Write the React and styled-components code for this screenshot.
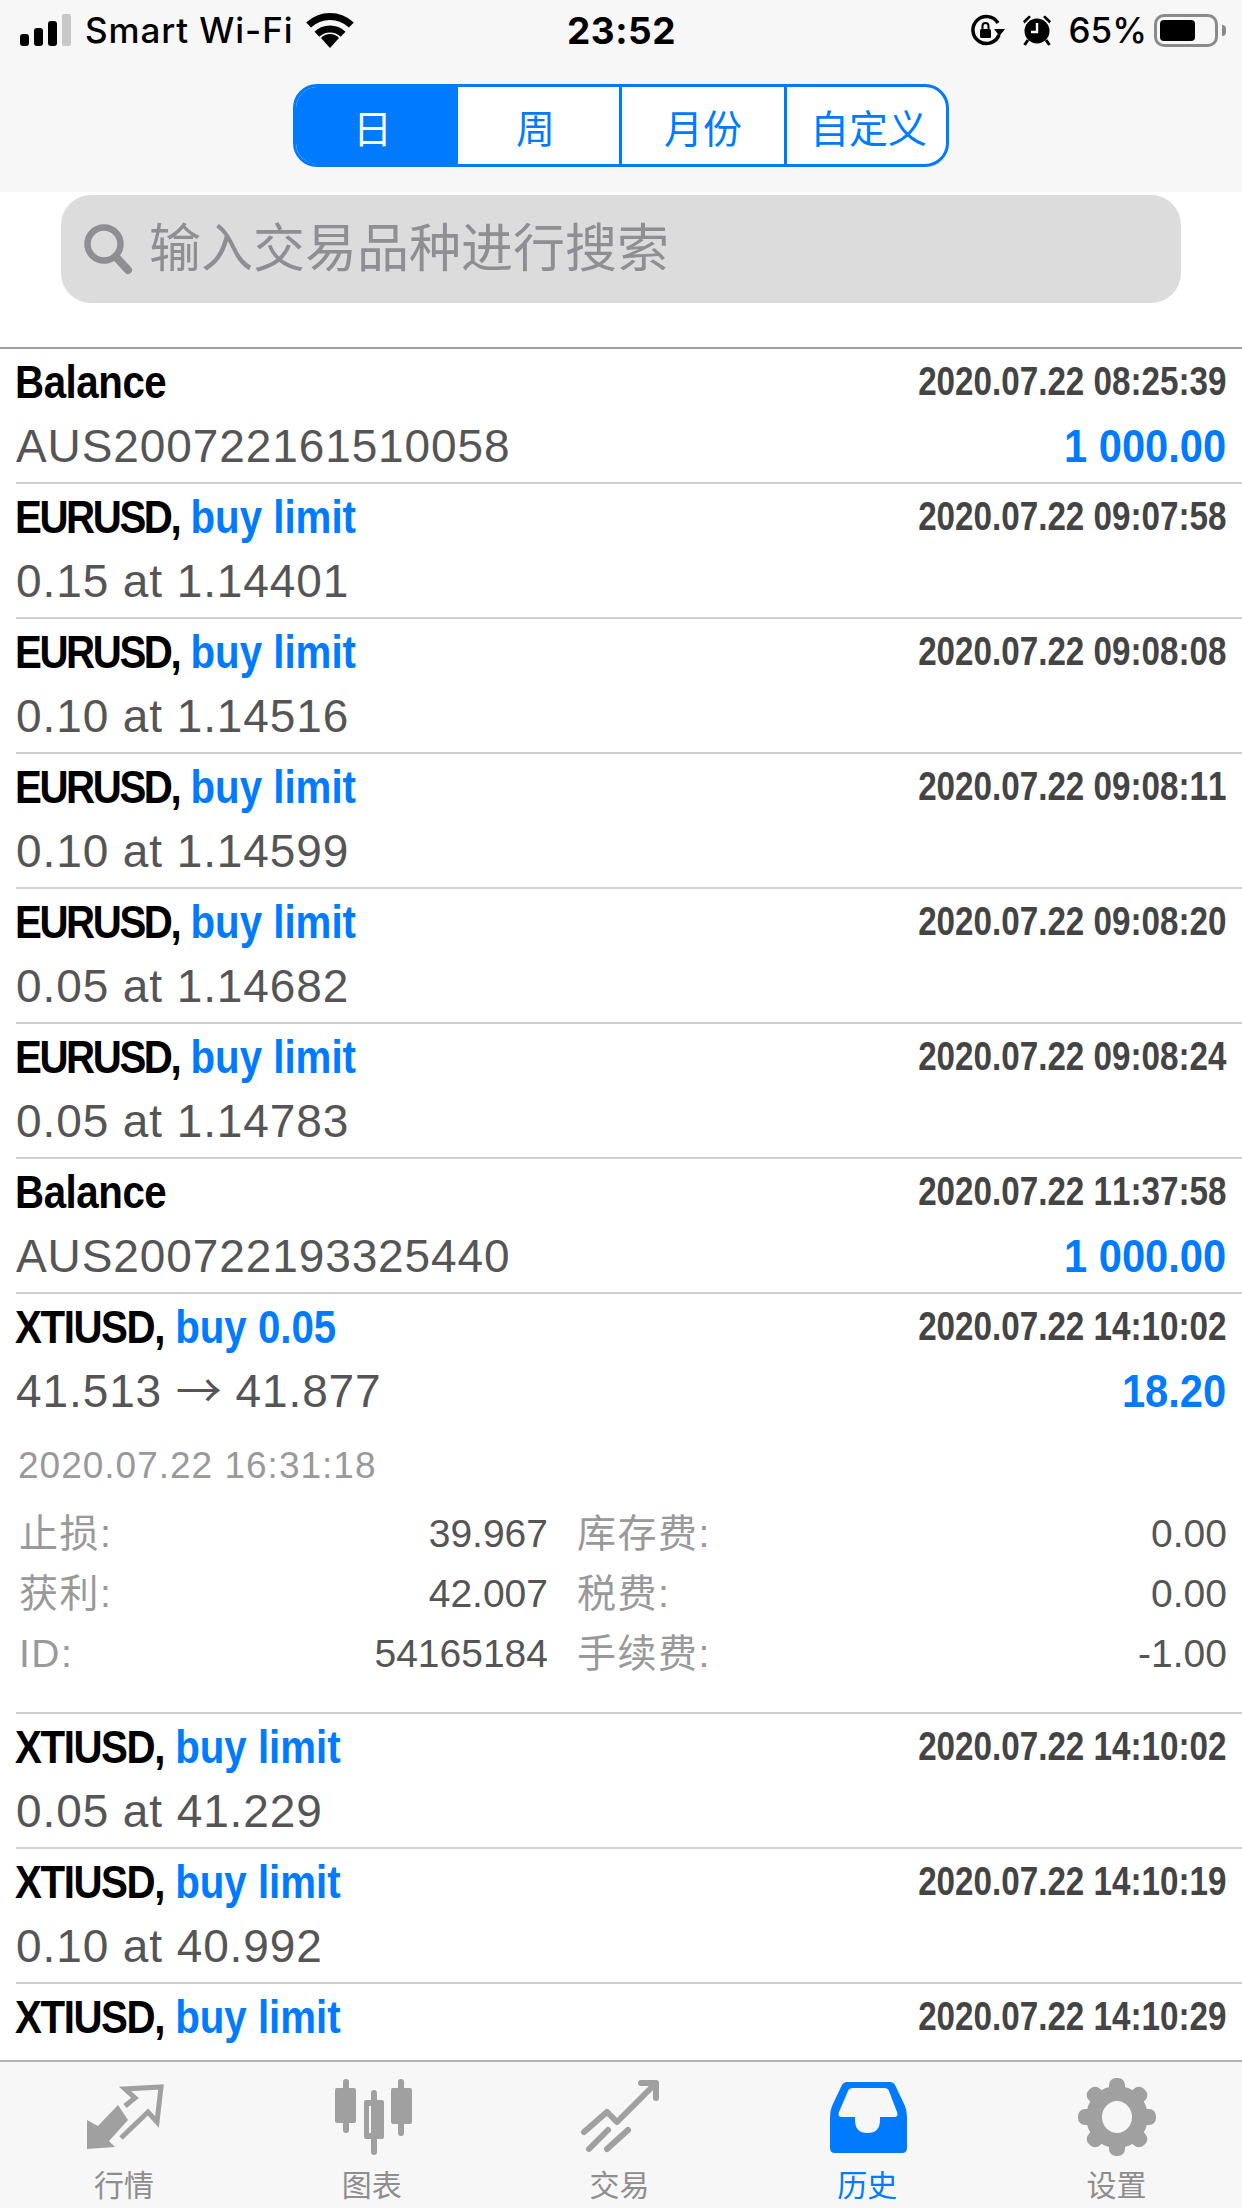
import React from "react";
import styled, { createGlobalStyle } from "styled-components";

const BLUE = "#007aff";
const ICON_GREY = "#a0a0a0";
const SANS = `"Liberation Sans", "Noto Sans CJK SC", sans-serif`;

const records = [
  { symbol: "Balance", date: "2020.07.22 08:25:39", sub: "AUS200722161510058", amount: "1 000.00" },
  { symbol: "EURUSD,", action: "buy limit", date: "2020.07.22 09:07:58", sub: "0.15 at 1.14401" },
  { symbol: "EURUSD,", action: "buy limit", date: "2020.07.22 09:08:08", sub: "0.10 at 1.14516" },
  { symbol: "EURUSD,", action: "buy limit", date: "2020.07.22 09:08:11", sub: "0.10 at 1.14599" },
  { symbol: "EURUSD,", action: "buy limit", date: "2020.07.22 09:08:20", sub: "0.05 at 1.14682" },
  { symbol: "EURUSD,", action: "buy limit", date: "2020.07.22 09:08:24", sub: "0.05 at 1.14783" },
  { symbol: "Balance", date: "2020.07.22 11:37:58", sub: "AUS200722193325440", amount: "1 000.00" },
  {
    symbol: "XTIUSD,",
    action: "buy 0.05",
    date: "2020.07.22 14:10:02",
    sub: "41.513 → 41.877",
    amount: "18.20",
    closed: "2020.07.22 16:31:18",
    details: [
      ["止损:", "39.967"],
      ["库存费:", "0.00"],
      ["获利:", "42.007"],
      ["税费:", "0.00"],
      ["ID:", "54165184"],
      ["手续费:", "-1.00"],
    ],
  },
  { symbol: "XTIUSD,", action: "buy limit", date: "2020.07.22 14:10:02", sub: "0.05 at 41.229" },
  { symbol: "XTIUSD,", action: "buy limit", date: "2020.07.22 14:10:19", sub: "0.10 at 40.992" },
  // second line of this one sits behind the tab bar
  { symbol: "XTIUSD,", action: "buy limit", date: "2020.07.22 14:10:29" },
];

const periods = ["日", "周", "月份", "自定义"];

const symbolTightness = { "EURUSD,": 2.75, "XTIUSD,": 1.6, Balance: 0.5 };

const MarketIcon = () => (
  <svg width="90" height="80" viewBox="0 0 90 80">
    <path d="M8 43 L8 72 L36 70 L30 64 L49 43 L39 28 L19 49 Z" fill={ICON_GREY} />
    <path
      d="M46 29 L56 21 L46 12 L82 10 L78 45 L69 35 L42 61"
      fill="none"
      stroke={ICON_GREY}
      strokeWidth="5"
    />
  </svg>
);

const ChartIcon = () => (
  <svg width="90" height="80" viewBox="0 0 90 80" fill={ICON_GREY}>
    <rect x="16" y="2" width="6" height="54" rx="3" />
    <rect x="8" y="11" width="21" height="35" rx="2" />
    <rect x="44" y="13" width="6" height="65" rx="3" />
    <path fillRule="evenodd" d="M37 25 a2 2 0 0 1 2 -2 h16 a2 2 0 0 1 2 2 v35 a2 2 0 0 1 -2 2 h-16 a2 2 0 0 1 -2 -2 Z M42 29 v27 h8 v-27 Z" />
    <rect x="71" y="2" width="6" height="57" rx="3" />
    <rect x="64" y="11" width="21" height="36" rx="2" />
  </svg>
);

const TradeIcon = () => (
  <svg width="90" height="80" viewBox="0 0 90 80" fill="none" stroke={ICON_GREY} strokeWidth="6" strokeLinecap="round" strokeLinejoin="round">
    <path d="M10 55 L33 35 L43 45 L80 8" />
    <path d="M67 6 L82 6 L82 21" />
    <path d="M15 72 L34 53" />
    <path d="M33 72 L54 53" />
  </svg>
);

const HistoryIcon = () => (
  <svg width="90" height="80" viewBox="0 0 90 80">
    <path
      fillRule="evenodd"
      fill={BLUE}
      d="M25 5 H68 Q72 5 74 10 L83 29 Q85 34 85 40 V71 Q85 76 80 76 H13 Q8 76 8 71 V40 Q8 34 10 29 L19 10 Q21 5 25 5 Z
         M31 11 Q27 11 26 14 L17 35 Q15 40 20 40 H33 V43 Q33 56 45.5 56 Q58 56 58 43 V40 H72 Q77 40 75 35 L67 14 Q66 11 62 11 Z"
    />
  </svg>
);

const SettingsIcon = () => (
  <svg width="90" height="80" viewBox="0 0 90 80" fill={ICON_GREY}>
    {[0, 45, 90, 135, 180, 225, 270, 315].map((angle) => (
      <rect key={angle} x="37" y="1" width="16" height="20" rx="7" transform={`rotate(${angle} 45 40)`} />
    ))}
    <circle cx="45" cy="40" r="31" />
    <ellipse cx="45" cy="40" rx="15" ry="16" fill="#f7f7f7" />
  </svg>
);

const tabs = [
  { label: "行情", Icon: MarketIcon },
  { label: "图表", Icon: ChartIcon },
  { label: "交易", Icon: TradeIcon },
  { label: "历史", Icon: HistoryIcon, active: true },
  { label: "设置", Icon: SettingsIcon },
];

const SignalIcon = () => (
  <svg width="52" height="32" viewBox="0 0 52 32">
    <rect x="0" y="20" width="9" height="12" rx="3" fill="#000" />
    <rect x="14" y="14" width="9" height="18" rx="3" fill="#000" />
    <rect x="28" y="7" width="9" height="25" rx="3" fill="#000" />
    <rect x="42" y="0" width="9" height="32" rx="2" fill="#c8c8c8" />
  </svg>
);

const WifiIcon = () => (
  <svg width="48" height="36" viewBox="0 0 48 36" fill="none" stroke="#000" strokeWidth="7">
    <path d="M2.6 13 A31 31 0 0 1 45.4 13" />
    <path d="M10.9 22.2 A19 19 0 0 1 37.1 22.2" />
    <path d="M24 36 L15 26 A12 12 0 0 1 33 26 Z" fill="#000" stroke="none" />
  </svg>
);

const RotationLockIcon = () => (
  <svg width="36" height="32" viewBox="0 0 36 32">
    <path d="M30 21 A13.5 13.5 0 1 1 29 9" fill="none" stroke="#000" strokeWidth="3.5" />
    <path d="M25 15 H36 L30.5 22 Z" fill="#000" />
    <rect x="11" y="15" width="11" height="9" rx="1.5" fill="#000" />
    <path d="M13.5 15 V12 A3 3 0 0 1 19.5 12 V15" fill="none" stroke="#000" strokeWidth="2" />
  </svg>
);

const AlarmIcon = () => (
  <svg width="30" height="32" viewBox="0 0 30 32">
    <circle cx="15" cy="17" r="12.5" fill="#000" />
    <path d="M1 7 L7 1.5 L9 3 L2.5 9.5 Z M29 7 L23 1.5 L21 3 L27.5 9.5 Z" fill="#000" />
    <path d="M6 26 L2.5 31 M24 26 L27.5 31" stroke="#000" strokeWidth="3" />
    <path d="M15 9 V18 H9" fill="none" stroke="#fff" strokeWidth="2.4" />
  </svg>
);

const SearchIcon = () => (
  <svg width="50" height="52" viewBox="0 0 50 52" fill="none" stroke="#8e8e93">
    <circle cx="21" cy="21" r="16.5" strokeWidth="6.5" />
    <path d="M33 34 L45 47" strokeWidth="8" strokeLinecap="round" />
  </svg>
);

const Record = ({ record }) => {
  const [from, to] = (record.sub || "").split(" → ");
  return (
    <Row>
      <Line>
        <Title>
          <Symbol $tight={symbolTightness[record.symbol]}>{record.symbol}</Symbol>
          {record.action && <Action> {record.action}</Action>}
        </Title>
        <DateText>{record.date}</DateText>
      </Line>
      <Line>
        <SubText>
          {from}
          {to && (
            <>
              {" "}
              <Arrow>→</Arrow> {to}
            </>
          )}
        </SubText>
        {record.amount && <Amount>{record.amount}</Amount>}
      </Line>
      {record.details && (
        <Details>
          <ClosedAt>{record.closed}</ClosedAt>
          <DetailGrid>
            {record.details.map(([label, value]) => (
              <DetailCell key={label}>
                <DetailLabel>{label}</DetailLabel>
                <DetailValue>{value}</DetailValue>
              </DetailCell>
            ))}
          </DetailGrid>
        </Details>
      )}
    </Row>
  );
};

export default function App() {
  return (
    <Page>
      <GlobalStyle />
      <Header>
        <StatusBar>
          <StatusLeft>
            <SignalIcon />
            <Carrier>Smart Wi-Fi</Carrier>
            <WifiIcon />
          </StatusLeft>
          <Clock>23:52</Clock>
          <StatusRight>
            <RotationLockIcon />
            <AlarmIcon />
            <BatteryText>65%</BatteryText>
            <Battery>
              <BatteryFill />
              <BatteryNub />
            </Battery>
          </StatusRight>
        </StatusBar>
        <SegmentWrap>
          <Segments>
            {periods.map((period, i) => (
              <Segment key={period} $active={i === 0}>
                {period}
              </Segment>
            ))}
          </Segments>
        </SegmentWrap>
      </Header>
      <SearchWrap>
        <SearchBox>
          <SearchIcon />
          <SearchInput placeholder="输入交易品种进行搜索" />
        </SearchBox>
      </SearchWrap>
      <List>
        {records.map((record, i) => (
          <Record key={i} record={record} />
        ))}
      </List>
      <TabBar>
        {tabs.map(({ label, Icon, active }) => (
          <Tab key={label}>
            <Icon />
            <TabLabel $active={active}>{label}</TabLabel>
          </Tab>
        ))}
      </TabBar>
    </Page>
  );
}

const GlobalStyle = createGlobalStyle`
  html, body {
    margin: 0;
    padding: 0;
    background: #fff;
  }
`;

const Page = styled.div`
  width: 1242px;
  height: 2208px;
  display: flex;
  flex-direction: column;
  overflow: hidden;
  background: #fff;
  font-family: ${SANS};
`;

const Header = styled.header`
  background: #f7f7f7;
  height: 192px;
  flex-shrink: 0;
`;

const StatusBar = styled.div`
  height: 60px;
  padding: 0 16px 0 20px;
  display: grid;
  grid-template-columns: 1fr auto 1fr;
  align-items: center;
  color: #000;
  font-family: Inter, "Liberation Sans", sans-serif;
`;

const StatusLeft = styled.div`
  display: flex;
  align-items: center;
  gap: 13px;
`;

const StatusRight = styled.div`
  display: flex;
  align-items: center;
  justify-content: flex-end;
  gap: 17px;
`;

const Carrier = styled.span`
  font-size: 35px;
  font-weight: 500;
  letter-spacing: 0.9px;
  white-space: nowrap;
`;

const Clock = styled.span`
  margin-left: -3px;
  font-size: 37px;
  font-weight: 700;
  letter-spacing: 0.5px;
`;

const BatteryText = styled.span`
  font-size: 35px;
  font-weight: 500;
  margin-right: -10px;
`;

const Battery = styled.div`
  position: relative;
  box-sizing: border-box;
  width: 64px;
  height: 33px;
  margin-right: 8px;
  padding: 3px;
  border: 3px solid #8a8a8a;
  border-radius: 10px;
`;

const BatteryFill = styled.div`
  width: 35px;
  height: 21px;
  background: #000;
  border-radius: 4px;
`;

const BatteryNub = styled.div`
  position: absolute;
  top: 8px;
  right: -11px;
  width: 4px;
  height: 11px;
  background: #8a8a8a;
  border-radius: 0 4px 4px 0;
`;

const SegmentWrap = styled.div`
  display: flex;
  justify-content: center;
  padding-top: 24px;
`;

const Segments = styled.div`
  box-sizing: border-box;
  width: 656px;
  height: 83px;
  display: grid;
  grid-template-columns: 162px 164px 165px 1fr;
  background: #fff;
  border: 3px solid ${BLUE};
  border-radius: 24px;
  overflow: hidden;
`;

const Segment = styled.div`
  box-sizing: border-box;
  display: flex;
  align-items: center;
  justify-content: center;
  font-size: 39px;
  color: ${(p) => (p.$active ? "#fff" : BLUE)};
  background: ${(p) => (p.$active ? BLUE : "transparent")};
  border-right: 3px solid ${BLUE};

  &:nth-child(-n + 2) {
    padding-right: 6px;
  }

  &:last-child {
    border-right: none;
    padding-left: 4px;
  }
`;

const SearchWrap = styled.div`
  height: 155px;
  flex-shrink: 0;
  box-sizing: border-box;
  padding: 3px 61px 0;
`;

const SearchBox = styled.div`
  box-sizing: border-box;
  height: 108px;
  display: flex;
  align-items: center;
  gap: 16px;
  padding-left: 22px;
  background: #dcdcdc;
  border-radius: 30px;
`;

const SearchInput = styled.input`
  flex: 1;
  min-width: 0;
  border: none;
  outline: none;
  padding: 0;
  background: transparent;
  font-family: ${SANS};
  font-size: 52px;

  &::placeholder {
    color: #8e8e93;
    opacity: 1;
  }
`;

const List = styled.main`
  flex: 1;
  min-height: 0;
  overflow: hidden;
  border-top: 2px solid #a0a0a0;
`;

const Row = styled.div`
  margin-left: 16px;
  padding: 1px 16px 4px 0;
  border-bottom: 2px solid #cfcfd2;
`;

const Line = styled.div`
  height: 64px;
  display: flex;
  justify-content: space-between;
  align-items: flex-start;
`;

const Title = styled.div`
  margin-left: -1px;
  font-size: 46px;
  line-height: 64px;
  font-weight: 700;
  color: #000;
  white-space: pre;
  transform: scaleX(0.875);
  transform-origin: left center;
`;

const Symbol = styled.span`
  letter-spacing: ${(p) => -p.$tight}px;
`;

const Action = styled.span`
  color: ${BLUE};
`;

const DateText = styled.div`
  font-size: 40px;
  line-height: 62px;
  font-weight: 700;
  font-kerning: none;
  color: #444;
  white-space: nowrap;
  transform: scaleX(0.83);
  transform-origin: right center;
`;

const SubText = styled.div`
  font-size: 46px;
  line-height: 64px;
  color: #555;
  letter-spacing: 0.9px;
  white-space: nowrap;
`;

const Arrow = styled.span`
  font-family: "Noto Sans CJK SC", sans-serif;
  line-height: 0;
  letter-spacing: 0;
`;

const Amount = styled.div`
  font-size: 46px;
  line-height: 64px;
  font-weight: 700;
  color: ${BLUE};
  white-space: nowrap;
  transform: scaleX(0.905);
  transform-origin: right center;
`;

const Details = styled.div`
  padding: 18px 0 24px 3px;
`;

const ClosedAt = styled.div`
  margin-left: -1px;
  font-size: 37px;
  line-height: 50px;
  letter-spacing: 1px;
  color: #999;
`;

const DetailGrid = styled.div`
  margin: 13px -1px 0 0;
  display: grid;
  grid-template-columns: 529px 1fr;
  column-gap: 29px;
`;

const DetailCell = styled.div`
  height: 60px;
  display: flex;
  justify-content: space-between;
  font-size: 39px;
  line-height: 60px;
`;

const DetailLabel = styled.span`
  letter-spacing: 1.5px;
  color: #999;
`;

const DetailValue = styled.span`
  color: #555;
`;

const TabBar = styled.nav`
  box-sizing: border-box;
  height: 148px;
  flex-shrink: 0;
  display: grid;
  grid-template-columns: repeat(5, 1fr);
  padding: 15px 3px 0 0;
  background: #f7f7f7;
  border-top: 2px solid #b4b4b4;
`;

const Tab = styled.div`
  display: flex;
  flex-direction: column;
  align-items: center;
  gap: 14px;

  &:last-child {
    padding-left: 3px;
  }
`;

const TabLabel = styled.span`
  font-size: 30px;
  line-height: 30px;
  color: ${(p) => (p.$active ? BLUE : "#8e8e8e")};
`;
